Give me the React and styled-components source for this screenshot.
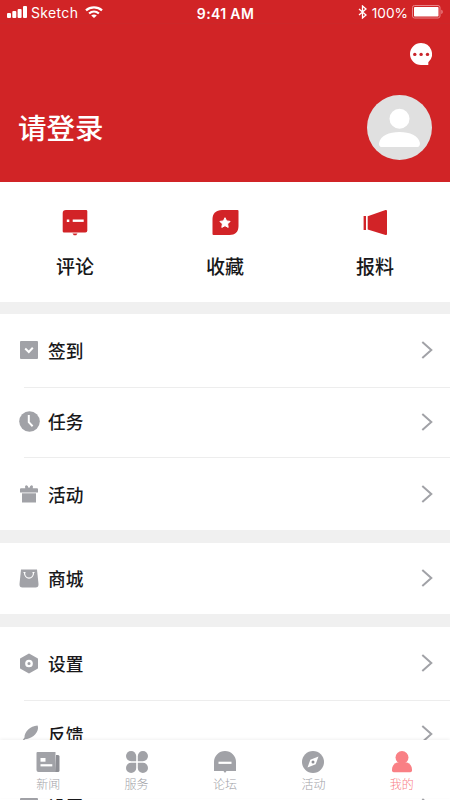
import React from 'react'
import styled, { createGlobalStyle } from 'styled-components'

const quickLinks = [
  { label: '评论', icon: <CommentIcon /> },
  { label: '收藏', icon: <FavoriteIcon /> },
  { label: '报料', icon: <ReportIcon /> },
]

const tabs = [
  { label: '新闻', icon: <NewsIcon /> },
  { label: '服务', icon: <ServiceIcon /> },
  { label: '论坛', icon: <ForumIcon /> },
  { label: '活动', icon: <CompassIcon /> },
  { label: '我的', icon: <UserIcon />, active: true },
]

const App = () => {
  return (
    <>
      <GlobalStyle />
      <Screen>
        <Header>
          <StatusBar>
            <StatusLeft>
              <SignalIcon />
              <Carrier>Sketch</Carrier>
              <WifiIcon />
            </StatusLeft>
            <Clock>9:41 AM</Clock>
            <StatusRight>
              <BluetoothIcon />
              <Percent>100%</Percent>
              <BatteryIcon />
            </StatusRight>
          </StatusBar>
          <HeaderTools>
            <MessageIcon />
          </HeaderTools>
          <Profile>
            <h1>请登录</h1>
            <AvatarIcon />
          </Profile>
        </Header>

        <QuickNav>
          {quickLinks.map(({ label, icon }) => (
            <QuickItem key={label}>
              {icon}
              <span>{label}</span>
            </QuickItem>
          ))}
        </QuickNav>

        <Group>
          <MenuRow label='签到' icon={<CheckinIcon />} height={73} />
          <MenuRow label='任务' icon={<TaskIcon />} height={70} divided />
          <MenuRow label='活动' icon={<GiftIcon />} height={73} divided />
        </Group>
        <Group>
          <MenuRow label='商城' icon={<MallIcon />} height={71} />
        </Group>
        <Group>
          <MenuRow label='设置' icon={<SettingIcon />} height={73} />
          <MenuRow label='反馈' icon={<FeedbackIcon />} height={69} divided />
          <MenuRow label='设置' icon={<CheckinIcon />} height={74} />
        </Group>

        <TabBar>
          {tabs.map(({ label, icon, active }) => (
            <Tab key={label} $active={active}>
              {icon}
              <span>{label}</span>
            </Tab>
          ))}
        </TabBar>
      </Screen>
    </>
  )
}

export default App

const MenuRow = ({ label, icon, height, divided }) => (
  <Row $height={height} $divided={divided}>
    <RowIcon>{icon}</RowIcon>
    <RowLabel>{label}</RowLabel>
    <Chevron width='12' height='18' viewBox='0 0 12 18'>
      <path d='M1.3 1L10.3 9L1.3 17' fill='none' stroke='#a1a2a7' strokeWidth='2' />
    </Chevron>
  </Row>
)

/* status bar icons */

function SignalIcon() {
  return (
    <svg width='20' height='12' viewBox='0 0 20 12' fill='#fff'>
      <rect x='0' y='7' width='4' height='5' rx='1' />
      <rect x='5.3' y='5' width='4' height='7' rx='1' />
      <rect x='10.6' y='3' width='4' height='9' rx='1' />
      <rect x='16' y='0' width='4' height='12' rx='1' />
    </svg>
  )
}

function WifiIcon() {
  return (
    <svg width='18' height='12' viewBox='0 0 18 12' fill='none' stroke='#fff' strokeWidth='2.3'>
      <path d='M1 4.4C5.5 0.4 12.5 0.4 17 4.4' />
      <path d='M4.1 7.5C7 5 11 5 13.9 7.5' />
      <path d='M6.2 9.5C8 8.1 10 8.1 11.8 9.5L9 12Z' fill='#fff' stroke='none' />
    </svg>
  )
}

function BluetoothIcon() {
  return (
    <svg width='9' height='14' viewBox='0 0 9 14' fill='none' stroke='#fff' strokeWidth='1.3'>
      <path d='M1 4L8 10L4.5 13V1L8 4L1 10' />
    </svg>
  )
}

function BatteryIcon() {
  return (
    <svg width='32' height='14' viewBox='0 0 32 14'>
      <rect x='0.5' y='0.5' width='27.5' height='12.5' rx='2' fill='none' stroke='#e88488' />
      <rect x='2' y='2' width='24.5' height='9.5' rx='0.7' fill='#fff' />
      <path d='M29.3 4.7C31.2 5.3 31.2 8.4 29.3 9Z' fill='#e88488' />
    </svg>
  )
}

/* header icons */

function MessageIcon() {
  return (
    <svg width='22' height='22' viewBox='0 0 22 22'>
      <path d='M11 0A11 11 0 1 0 11 22H18.3V19.2A11 11 0 0 0 11 0Z' fill='#fff' />
      <g fill='#c9252b'>
        <circle cx='4.8' cy='11.4' r='1.7' />
        <circle cx='11.1' cy='11.4' r='1.7' />
        <circle cx='17.5' cy='11.4' r='1.7' />
      </g>
    </svg>
  )
}

function AvatarIcon() {
  return (
    <svg width='65' height='65' viewBox='0 0 65 65'>
      <circle cx='32.5' cy='32.5' r='32.5' fill='#e0e0e0' />
      <circle cx='32.5' cy='23.7' r='10' fill='#fff' />
      <path d='M14.5 52C12.2 52 11.8 49.5 12.2 47.5C13.5 41 22 37 32.5 37S51.5 41 52.8 47.5C53.2 49.5 52.5 52 50.5 52Z' fill='#fff' />
    </svg>
  )
}

/* quick link icons */

function CommentIcon() {
  return (
    <svg width='26' height='27' viewBox='0 0 26 27'>
      <path d='M4 1H24Q25.3 1 25.3 2.3V21.5Q25.3 23.5 23.3 23.5H2Q0.7 23.5 0.7 22.2V4Q0.7 1 4 1Z' fill='#d22327' />
      <path d='M10.5 24.5H15.5L14.2 26.3H11.8Z' fill='#d22327' />
      <rect x='4.8' y='10.5' width='2.5' height='2.5' fill='#fff' />
      <rect x='10.7' y='10.5' width='11' height='2.4' fill='#fff' />
    </svg>
  )
}

function FavoriteIcon() {
  return (
    <svg width='27' height='27' viewBox='0 0 27 27'>
      <path d='M10 1H25.5Q26.5 1 26.5 2V17C26.5 23 23 26 17.5 26H1.5Q0.5 26 0.5 25V10C0.5 4.5 4 1 10 1Z' fill='#d22327' />
      <path
        d='M13 8.7L14.6 11.9L18.1 12.4L15.6 14.9L16.2 18.4L13 16.7L9.8 18.4L10.4 14.9L7.9 12.4L11.4 11.9Z'
        fill='#fff' stroke='#fff' strokeWidth='1' strokeLinejoin='round'
      />
    </svg>
  )
}

function ReportIcon() {
  return (
    <svg width='25' height='27' viewBox='0 0 25 27' fill='#d22327'>
      <rect x='0.6' y='7' width='2.4' height='14' />
      <path d='M4.7 7.3L22.5 1Q24 0.7 24 2V25Q24 26.4 22.5 26L4.7 20.5Z' />
    </svg>
  )
}

/* menu icons */

function CheckinIcon() {
  return (
    <svg width='18' height='18' viewBox='0 0 18 18'>
      <rect width='18' height='18' rx='1' fill='#a1a2a7' />
      <path d='M5.2 7.5L8.8 11L12.8 6.8' fill='none' stroke='#fff' strokeWidth='2' />
    </svg>
  )
}

function TaskIcon() {
  return (
    <svg width='21' height='21' viewBox='0 0 21 21'>
      <circle cx='10.5' cy='10.5' r='10.3' fill='#a1a2a7' />
      <path d='M9.8 4V11.2L13.6 15.2' fill='none' stroke='#fff' strokeWidth='2' />
    </svg>
  )
}

function GiftIcon() {
  return (
    <svg width='18' height='18' viewBox='0 0 18 18' fill='#a1a2a7'>
      <path d='M1 3.3H5.2Q4.5 1 6 0.3Q8 0 8.5 2.8H9.5Q10 0 12 0.3Q13.5 1 12.8 3.3H17Q18 3.3 18 4.3V7.5H0V4.3Q0 3.3 1 3.3Z' />
      <path d='M2 8.3H16V17.5H2Z' />
    </svg>
  )
}

function MallIcon() {
  return (
    <svg width='20' height='19' viewBox='0 0 20 19'>
      <path d='M2 0.5H18L19.5 15Q19.7 18.5 16.5 18.5H3.5Q0.3 18.5 0.5 15Z' fill='#a1a2a7' />
      <path d='M4.5 3.5H6.5M13.5 3.5H15.5M5.5 3.5C5.5 11 14.5 11 14.5 3.5' fill='none' stroke='#fff' strokeWidth='1.2' />
    </svg>
  )
}

function SettingIcon() {
  return (
    <svg width='20' height='21' viewBox='0 0 20 21'>
      <path d='M10 1.5L18 6V15L10 19.5L2 15V6Z' fill='#a1a2a7' stroke='#a1a2a7' strokeWidth='2' strokeLinejoin='round' />
      <circle cx='10' cy='10.5' r='2.7' fill='none' stroke='#fff' strokeWidth='2.3' />
    </svg>
  )
}

function FeedbackIcon() {
  return (
    <svg width='18' height='18' viewBox='0 0 18 18'>
      <path d='M17.5 0.5C19 4 17 8 13.5 11C11 13 7.5 14.2 5 14.3C4 15.400 3.300 16.600 2.700 18H1.300C2.300 15.700 3.300 14 4.500 12.500C4.300 6.800 10 1.300 17.500 0.500Z' fill='#a1a2a7' />
    </svg>
  )
}

/* tab bar icons */

function NewsIcon() {
  return (
    <svg width='24' height='22' viewBox='0 0 24 22'>
      <path d='M20 4H22Q23.5 4 23.5 5.5V19.5Q23.5 21 22 21H19Z' fill='#8d8e94' />
      <path d='M1.5 1H19.5V21H2.5Q0.5 21 0.5 19V2Q0.5 1 1.5 1Z' fill='#a1a2a7' />
      <rect x='4.5' y='7' width='5' height='3.7' fill='#fff' />
      <rect x='4.5' y='13.2' width='11.8' height='2.2' fill='#fff' />
    </svg>
  )
}

function ServiceIcon() {
  return (
    <svg width='22' height='22' viewBox='0 0 22 22' fill='#a1a2a7'>
      <path d='M5.1 0A5.1 5.1 0 0 1 10.2 5.1V10.2H5.1A5.1 5.1 0 0 1 5.1 0Z' />
      <path d='M16.9 0A5.1 5.1 0 0 0 11.8 5.1V10.2H16.9A5.1 5.1 0 0 0 16.9 0Z' />
      <path d='M5.1 22A5.1 5.1 0 0 0 10.2 16.9V11.8H5.1A5.1 5.1 0 0 0 5.1 22Z' />
      <path d='M16.9 22A5.1 5.1 0 0 1 11.8 16.9V11.8H16.9A5.1 5.1 0 0 1 16.9 22Z' />
    </svg>
  )
}

function ForumIcon() {
  return (
    <svg width='22' height='22' viewBox='0 0 22 22'>
      <path d='M11 0A11 11 0 0 1 22 11V20H12.5L11 22L9.5 20H0V11A11 11 0 0 1 11 0Z' fill='#a1a2a7' />
      <rect x='4.5' y='10.7' width='13' height='2.2' fill='#fff' />
    </svg>
  )
}

function CompassIcon() {
  return (
    <svg width='22' height='22' viewBox='0 0 22 22'>
      <circle cx='11' cy='11' r='11' fill='#a1a2a7' />
      <path d='M16.5 5.5L13.7 13.2L5.5 16.5L8.3 8.8Z' fill='#fff' />
      <circle cx='11' cy='11' r='1.5' fill='#8d8e94' />
    </svg>
  )
}

function UserIcon() {
  return (
    <svg width='22' height='22' viewBox='0 0 22 22' fill='#f98085'>
      <circle cx='11' cy='6.5' r='6.5' />
      <path d='M6 11.5H16C19.2 12.5 21 15.5 21 18.5V19.5Q21 21.2 19.3 21.2H2.7Q1 21.2 1 19.5V18.5C1 15.5 2.8 12.5 6 11.5Z' />
    </svg>
  )
}

const GlobalStyle = createGlobalStyle`
  * {
    box-sizing: border-box;
  }

  body {
    margin: 0;
    font-family: Inter, 'Noto Sans CJK SC', sans-serif;
  }

  svg {
    display: block;
    flex-shrink: 0;
  }
`

const Screen = styled.div`
  position: relative;
  width: 450px;
  height: 800px;
  overflow: hidden;
  background: #f0f0f0;
`

const Header = styled.header`
  height: 182px;
  background: #d12426;
  color: white;
`

const StatusBar = styled.div`
  display: grid;
  grid-template-columns: 1fr auto 1fr;
  align-items: center;
  height: 24px;
  padding: 0 6px 0 7px;
  border-bottom: 1px solid #cc2729;
  line-height: 20px;
`

const StatusLeft = styled.div`
  display: flex;
  align-items: center;

  svg:last-child {
    margin-left: 7px;
  }
`

const Carrier = styled.span`
  margin-left: 4px;
  padding-top: 2px;
  font-size: 14px;
  letter-spacing: 0.35px;
`

const Clock = styled.span`
  padding-top: 4px;
  font-size: 14px;
  font-weight: 600;
  letter-spacing: 0.35px;
`

const StatusRight = styled.div`
  display: flex;
  align-items: center;
  justify-content: flex-end;
`

const Percent = styled.span`
  margin: 2px 4px 0 5px;
  font-size: 13.7px;
`

const HeaderTools = styled.div`
  display: flex;
  justify-content: flex-end;
  padding: 19px 18px 0 0;
`

const Profile = styled.div`
  display: flex;
  align-items: center;
  justify-content: space-between;
  margin-top: 30px;
  padding: 0 18px;

  h1 {
    margin: 2px 0 0;
    font-size: 28.5px;
    font-weight: 500;
    line-height: 40px;
  }
`

const QuickNav = styled.nav`
  display: grid;
  grid-template-columns: repeat(3, 1fr);
  height: 120px;
  background: white;
`

const QuickItem = styled.div`
  display: flex;
  flex-direction: column;
  align-items: center;
  padding-top: 27px;
  color: #18181a;

  span {
    margin-top: 18px;
    font-size: 19px;
    font-weight: 500;
    line-height: 28px;
  }
`

const Group = styled.section`
  margin-top: 12px;
  background: white;

  & + & {
    margin-top: 13px;
  }
`

const Row = styled.div`
  position: relative;
  display: flex;
  align-items: center;
  height: ${({ $height }) => $height}px;
  padding: 0 18px 1px;

  &::before {
    content: '';
    display: ${({ $divided }) => ($divided ? 'block' : 'none')};
    position: absolute;
    top: 0;
    left: 24px;
    right: 0;
    height: 1px;
    background: #ededed;
  }

  &:nth-child(3) {
    padding: 1px 18px 0;
  }
`

const RowIcon = styled.div`
  display: flex;
  justify-content: center;
  width: 22px;
`

const RowLabel = styled.span`
  flex: 1;
  margin-left: 8px;
  padding-top: 3px;
  color: #18181a;
  font-size: 17.7px;
  font-weight: 500;
  line-height: 26px;
`

const Chevron = styled.svg`
  margin-right: -1px;
`

const TabBar = styled.nav`
  position: absolute;
  top: 740px;
  left: 0;
  right: 0;
  display: grid;
  grid-template-columns: repeat(5, 1fr);
  height: 58px;
  padding: 11px 4px 0;
  background: white;
  box-shadow: 0 -1px 3px rgba(0, 0, 0, 0.06);
`

const Tab = styled.div`
  display: flex;
  flex-direction: column;
  align-items: center;
  color: ${({ $active }) => ($active ? '#f98085' : '#a1a2a7')};

  span {
    margin-top: 3px;
    font-size: 12px;
    font-weight: 300;
    line-height: 18px;
  }
`
